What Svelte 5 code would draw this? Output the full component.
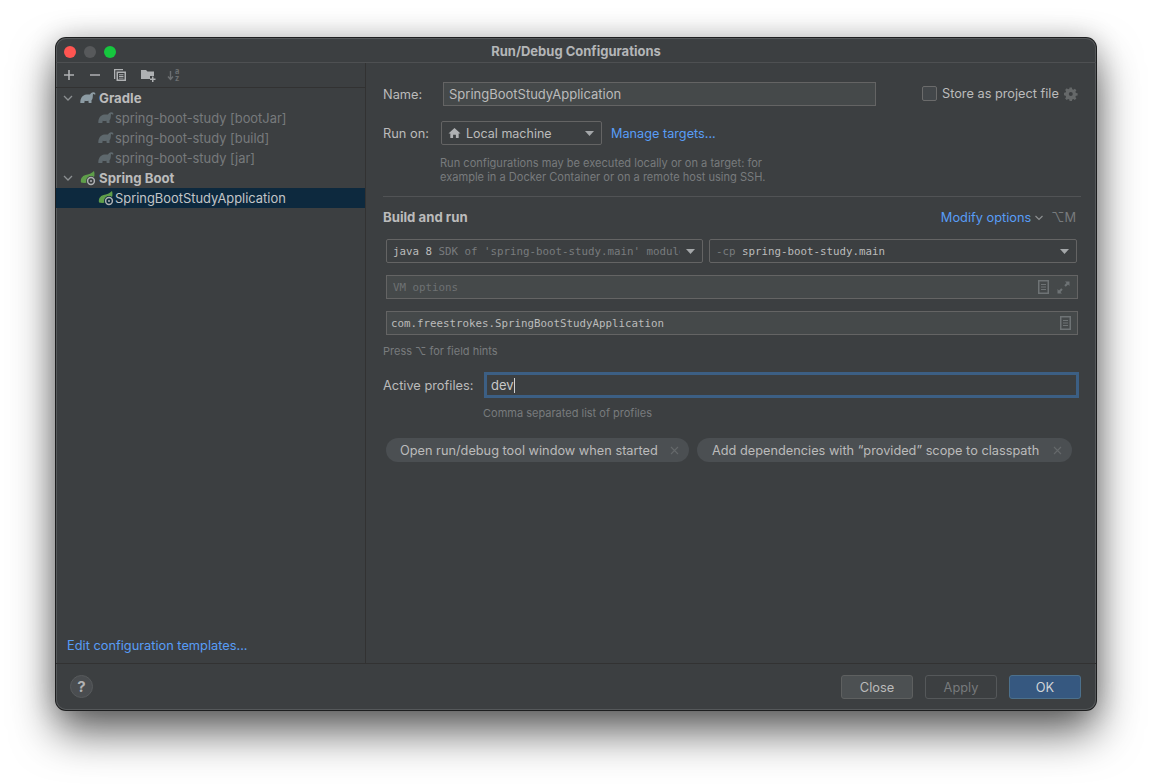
<script>
  const gradleChildren = ['spring-boot-study [bootJar]', 'spring-boot-study [build]', 'spring-boot-study [jar]'];
</script>

{#snippet chevron()}
  <svg class="chev" width="10" height="10" viewBox="0 0 10 10"><path d="M1 3l4 4 4-4" fill="none" stroke="#8c8f91" stroke-width="1.3"/></svg>
{/snippet}
{#snippet elephant(cls)}
  <svg class={cls} width="16" height="12" viewBox="0 0 16 12"><path d="M.3 11C.3 6.500 2 3 6.500 2.500c1.500-.2 2.500.3 3.500 0C10.500 1 12 0 13.500.2c1.500.2 2.100 1.200 1.900 2.300h-1.200c-.2-.7-.9-.8-1.200-.3-.3.8 0 2.800-.5 4.300-.3 1-.8 1.500-1 2V11H8.700l-.3-2.200c-1.200.4-2.600.4-3.700 0L4.300 11H1.600z" fill="currentColor"/></svg>
{/snippet}
{#snippet spring()}
  <svg class="springicon" width="17" height="16" viewBox="0 0 17 16">
    <path d="M1 12.500C.3 9 2 6 5.500 5 8.500 4.200 11.800 3.500 14 1c1 3 .5 6.500-1.500 8.500-2.500 3-7.500 4-11.500 3z" fill="#5f9e4a"/>
    <circle class="halo" cx="11" cy="11" r="5" fill="#3c3f41"/>
    <circle cx="11" cy="11" r="3.400" fill="none" stroke="#afb1b3" stroke-width="1.500"/>
    <circle cx="11" cy="11" r="1" fill="#afb1b3"/>
  </svg>
{/snippet}
{#snippet doc()}
  <svg width="11" height="14" viewBox="0 0 11 14"><path fill-rule="evenodd" d="M0 0h11v14H0zM1.500 1.500v11h8v-11z" fill="#6e7375"/><path d="M3 4h5v1H3zM3 6.500h5v1H3zM3 9h5v1H3z" fill="#6e7375"/></svg>
{/snippet}
{#snippet caret()}
  <svg class="caret" width="9" height="5" viewBox="0 0 9 5"><path d="M0 0h9L4.500 5z" fill="#a4a7a9"/></svg>
{/snippet}
{#snippet cross()}
  <svg class="x" width="9" height="9" viewBox="0 0 9 9"><path d="M1 1l7 7M8 1L1 8" stroke="#65696b" stroke-width="1.100" fill="none"/></svg>
{/snippet}

<div class="stage">
  <div class="window">
    <header class="titlebar">
      <div class="lights"><i class="red"></i><i class="gray"></i><i class="green"></i></div>
      <span class="title">Run/Debug Configurations</span>
    </header>

    <div class="body">
      <aside class="side">
        <div class="toolbar">
          <svg width="12" height="12" viewBox="0 0 12 12"><path d="M6 1v10M1 6h10" stroke="#afb1b3" stroke-width="1.600"/></svg>
          <svg width="12" height="12" viewBox="0 0 12 12"><path d="M1 6h10" stroke="#afb1b3" stroke-width="1.600"/></svg>
          <svg width="14" height="14" viewBox="0 0 14 14"><path d="M1 1h9v1.300H2.300V11H1z" fill="#afb1b3"/><path fill-rule="evenodd" d="M3.500 3.500H13V13H3.500zM5 5v6.500h6.500V5z" fill="#afb1b3"/><path d="M6 6.200h4.500v1H6zM6 8h4.500v1H6zM6 9.800h4.500v.800H6z" fill="#afb1b3"/></svg>
          <svg width="15" height="13" viewBox="0 0 15 13"><path d="M0 1h5l1.500 1.500H13V7H9v3H0z" fill="#afb1b3"/><path d="M11 7.500h1.500V9.500H14.500V11H12.500v2H11v-2H9V9.500h2z" fill="#afb1b3"/></svg>
          <svg class="sort" width="14" height="14" viewBox="0 0 14 14"><path d="M3.500 3v8M1 8.500l2.500 3 2.500-3" stroke="#6c6f71" stroke-width="1.400" fill="none"/><text x="8" y="6" class="az">a</text><text x="8" y="13" class="az">z</text></svg>
        </div>

        <div class="tree">
          <div class="row group">{@render chevron()}<span class="gi">{@render elephant('gradle')}</span><b>Gradle</b></div>
          {#each gradleChildren as child}
            <div class="row leaf dim">{@render elephant('gradle faded')}<span>{child}</span></div>
          {/each}
          <div class="row group">{@render chevron()}<span class="gi">{@render spring()}</span><b>Spring Boot</b></div>
          <div class="row leaf selected">{@render spring()}<span>SpringBootStudyApplication</span></div>
        </div>

        <a class="link templates" href="#templates">Edit configuration templates...</a>
      </aside>

      <main class="pane">
        <div class="name-row">
          <label class="lbl name-lbl" for="cfg-name">Name:</label>
          <div class="input name-input" id="cfg-name">SpringBootStudyApplication</div>
          <span class="check"></span>
          <span class="store">Store as project file</span>
          <svg class="gear" width="14" height="14" viewBox="0 0 14 14"><path fill-rule="evenodd" d="M5.600.500h2.300l.3 1.700 1.200.5 1.400-1 1.600 1.600-1 1.400.5 1.200 1.700.3v2.300l-1.700.3-.5 1.200 1 1.400-1.600 1.600-1.400-1-1.200.5-.3 1.700H5.600l-.3-1.700-1.200-.5-1.400 1-1.600-1.600 1-1.400-.5-1.200L-.1 8.100V5.800l1.700-.3.5-1.200-1-1.400 1.600-1.600 1.400 1 1.200-.5zM6.800 5a2 2 0 100 4 2 2 0 000-4z" fill="#656869"/></svg>
        </div>

        <div class="run-row">
          <span class="lbl run-lbl">Run on:</span>
          <div class="select local">
            <svg width="13" height="12" viewBox="0 0 14 12"><path d="M7 .500L13.500 6.500H11.500V11.500H8.500V8H5.500V11.500H2.500V6.500H.500z" fill="#afb1b3"/></svg>
            <span class="grow">Local machine</span>
            {@render caret()}
          </div>
          <a class="link manage" href="#targets">Manage targets...</a>
        </div>

        <p class="hint run-hint">Run configurations may be executed locally or on a target: for<br>example in a Docker Container or on a remote host using SSH.</p>

        <hr class="sep" />

        <div class="section-row">
          <b class="section">Build and run</b>
          <a class="link modify" href="#modify">Modify options</a>
          <svg class="mod-chev" width="8" height="6" viewBox="0 0 8 6"><path d="M.500 1L4 4.500 7.500 1" fill="none" stroke="#8c8f91" stroke-width="1.200"/></svg>
          <span class="shortcut">⌥M</span>
        </div>

        <div class="fields">
          <div class="select-row">
            <div class="select mono sdk">
              <span class="grow clip"><em>java 8</em> SDK of 'spring-boot-study.main' module</span>
              {@render caret()}
            </div>
            <div class="select mono cp">
              <span class="grow">-cp <em>spring-boot-study.main</em></span>
              {@render caret()}
            </div>
          </div>

          <div class="input mono vm">
            <span class="grow placeholder">VM options</span>
            {@render doc()}
            <svg class="expand" width="13" height="13" viewBox="0 0 13 13"><path d="M8 .500h4.500V5L11 3.500 8.800 5.700 7.300 4.200 9.500 2zM5 12.500H.500V8L2 9.500l2.200-2.200 1.500 1.500L3.500 11z" fill="#6e7375"/></svg>
          </div>

          <div class="input mono main-class">
            <span class="grow">com.freestrokes.SpringBootStudyApplication</span>
            {@render doc()}
          </div>
        </div>

        <p class="hint press">Press ⌥ for field hints</p>

        <div class="profiles-row">
          <span class="lbl prof-lbl">Active profiles:</span>
          <div class="focus-input"><span>dev</span><i class="cursor"></i></div>
        </div>
        <p class="hint comma">Comma separated list of profiles</p>

        <div class="chips">
          <span class="chip one">Open run/debug tool window when started{@render cross()}</span>
          <span class="chip two">Add dependencies with “provided” scope to classpath{@render cross()}</span>
        </div>
      </main>
    </div>

    <footer class="footer">
      <span class="help">?</span>
      <button class="btn">Close</button>
      <button class="btn disabled">Apply</button>
      <button class="btn ok">OK</button>
    </footer>
  </div>
</div>

<style>
  :global(body) { margin: 0; background: #fff; }
  .stage {
    width: 1152px; height: 784px; box-sizing: border-box; padding: 38px 56px; overflow: hidden;
    background: #fff;
    font-family: Inter, "Liberation Sans", sans-serif; font-size: 12.8px; color: #bbbbbb;
  }
  .window {
    width: 1040px; height: 672px; box-sizing: border-box; display: flex; flex-direction: column;
    background: #3c3f41; border-radius: 10px; overflow: hidden;
    box-shadow: 0 0 0 1px #1d1e1f, inset 0 0 0 1px #55585a, 0 22px 44px rgba(0,0,0,.62), 0 0 28px rgba(0,0,0,.2);
  }
  .titlebar {
    height: 25px; box-sizing: border-box; flex: none; position: relative; display: flex; align-items: center; justify-content: center;
    border-bottom: 1px solid #4e5052; padding-top: 2px;
  }
  .lights { position: absolute; left: 8px; top: 8px; display: flex; gap: 8px; }
  .lights i { width: 12px; height: 12px; border-radius: 50%; display: block; }
  .red { background: #ff5551; } .gray { background: #57595b; } .green { background: #16c73e; }
  .title { font-weight: 700; font-size: 13px; color: #b4b6b8; }

  .body { flex: 1; display: flex; min-height: 0; }
  .side { width: 309px; flex: none; border-right: 1px solid #323232; display: flex; flex-direction: column; }
  .toolbar { height: 25px; box-sizing: border-box; flex: none; display: flex; align-items: center; border-bottom: 1px solid #323232; padding-left: 7px; gap: 14px; }
  .toolbar svg:nth-child(3) { margin-left: -2px; }
  .toolbar .sort { margin-left: -3px; overflow: visible; }
  .az { font: 700 7.5px Inter, sans-serif; fill: #6c6f71; }
  .tree { flex: 1; }
  .row { height: 20px; display: flex; align-items: center; white-space: nowrap; }
  .group { padding-left: 7px; }
  .group b { color: #bbbbbb; font-weight: 700; font-size: 13.2px; margin-left: 3px; }
  .gi { display: flex; margin-left: 7px; width: 16px; }
  .chev { flex: none; }
  .leaf { padding-left: 42px; }
  .leaf span { font-size: 12.9px; margin-left: 1px; }
  .dim { color: #777a7c; }
  .gradle { color: #8c9ba3; flex: none; }
  .faded { color: #5e686d; }
  .springicon { flex: none; margin-right: -1px; }
  .selected { background: #0d293e; color: #c2c5c7; }
  .selected .halo { fill: #0d293e; }
  .link { color: #589df6; text-decoration: none; white-space: nowrap; }
  .templates { padding: 0 0 10px 11px; }

  .pane { flex: 1; min-width: 0; box-sizing: border-box; padding: 19px 15px 0 17px; display: flex; flex-direction: column; }
  .lbl { white-space: nowrap; }
  .input { box-sizing: border-box; height: 24px; background: #45494a; border: 1px solid #646464; display: flex; align-items: center; white-space: nowrap; }
  .name-row { display: flex; align-items: center; height: 24px; }
  .name-lbl { width: 60px; }
  .name-input { width: 433px; padding-left: 5px; font-size: 13px; }
  .check { width: 13px; height: 13px; border: 1px solid #6b6b6b; border-radius: 2px; background: #43474a; margin: -2px 5px 0 46px; flex: none; }
  .store { margin-top: -2px; font-size: 12.75px; }
  .gear { margin: 0 0 0 5px; }

  .run-row { display: flex; align-items: center; height: 24px; margin-top: 15px; }
  .run-lbl { width: 58px; }
  .select { box-sizing: border-box; height: 24px; border: 1px solid #646464; border-radius: 2px; display: flex; align-items: center; white-space: nowrap; background: #3c3f41; }
  .grow { flex: 1; min-width: 0; }
  .local { width: 161px; padding: 0 7px 0 6px; gap: 5px; font-size: 12.5px; }
  .manage { margin-left: 9px; font-size: 12.7px; }
  .caret { flex: none; }

  .hint { margin: 0; font-size: 11px; line-height: 14px; color: #787b7d; white-space: nowrap; }
  .run-hint { margin: 11px 0 0 57px; font-size: 11.07px; }
  .sep { border: 0; border-top: 1px solid #515355; margin: 12px 0 0; width: 698px; }

  .section-row { height: 16px; margin-top: 12px; display: flex; align-items: center; }
  .section { font-weight: 700; font-size: 13.2px; flex: 1; }
  .mod-chev { margin: 1px 0 0 4px; }
  .shortcut { color: #787b7d; margin: 0 5px 0 8px; }

  .fields { margin: 14px 0 0 3px; width: 692px; display: flex; flex-direction: column; gap: 12px; }
  .select-row { display: flex; gap: 6px; }
  .mono { font-family: "DejaVu Sans Mono", monospace; font-size: 10.8px; color: #787b7d; }
  .mono em { font-style: normal; color: #bbbbbb; }
  .sdk { width: 317px; padding: 0 7px 0 6px; gap: 6px; }
  .cp { width: 368px; padding: 0 7px 0 6px; }
  .clip { overflow: hidden; }
  .vm { padding: 0 7px 0 6px; gap: 8px; }
  .placeholder { color: #6e7173; }
  .main-class { padding: 0 6px 0 4px; color: #bbbbbb; }
  .press { margin: 9px 0 0; }

  .profiles-row { display: flex; align-items: center; margin-top: 14px; }
  .prof-lbl { width: 101px; }
  .focus-input { box-sizing: border-box; width: 595px; height: 26px; border: 3px solid #3c5f84; padding-left: 4px; display: flex; align-items: center; color: #c8c8c8; font-size: 13px; }
  .cursor { display: block; width: 1px; height: 15px; background: #d0d0d0; }
  .comma { margin: 8px 0 0 100px; }

  .chips { display: flex; gap: 8px; margin: 18px 0 0 3px; }
  .chip { height: 24px; box-sizing: border-box; background: #4b4f52; border-radius: 12px; display: flex; align-items: center; white-space: nowrap; padding-left: 14px; font-size: 12.76px; }
  .one { width: 303px; } .two { width: 375px; padding-left: 15px; }
  .x { margin-left: auto; margin-right: 10px; }

  .footer { height: 47px; flex: none; border-top: 1px solid #323232; box-sizing: border-box; display: flex; align-items: flex-start; padding: 11px 15px 0 14px; gap: 12px; }
  .help { width: 23px; height: 23px; border-radius: 50%; background: #4a4d50; border: 1px solid #575a5c; box-sizing: border-box; display: flex; align-items: center; justify-content: center; font-weight: 700; font-size: 15px; color: #b0b2b4; margin-right: auto; }
  .btn { width: 72px; height: 24px; box-sizing: border-box; border-radius: 3px; border: 1px solid #5e6060; background: #4c5052; color: #bbbbbb; font: inherit; padding: 0; }
  .disabled { background: transparent; border-color: #55585a; color: #777a7c; }
  .ok { background: #365880; border-color: #4c708c; color: #d0d4d8; }
</style>
